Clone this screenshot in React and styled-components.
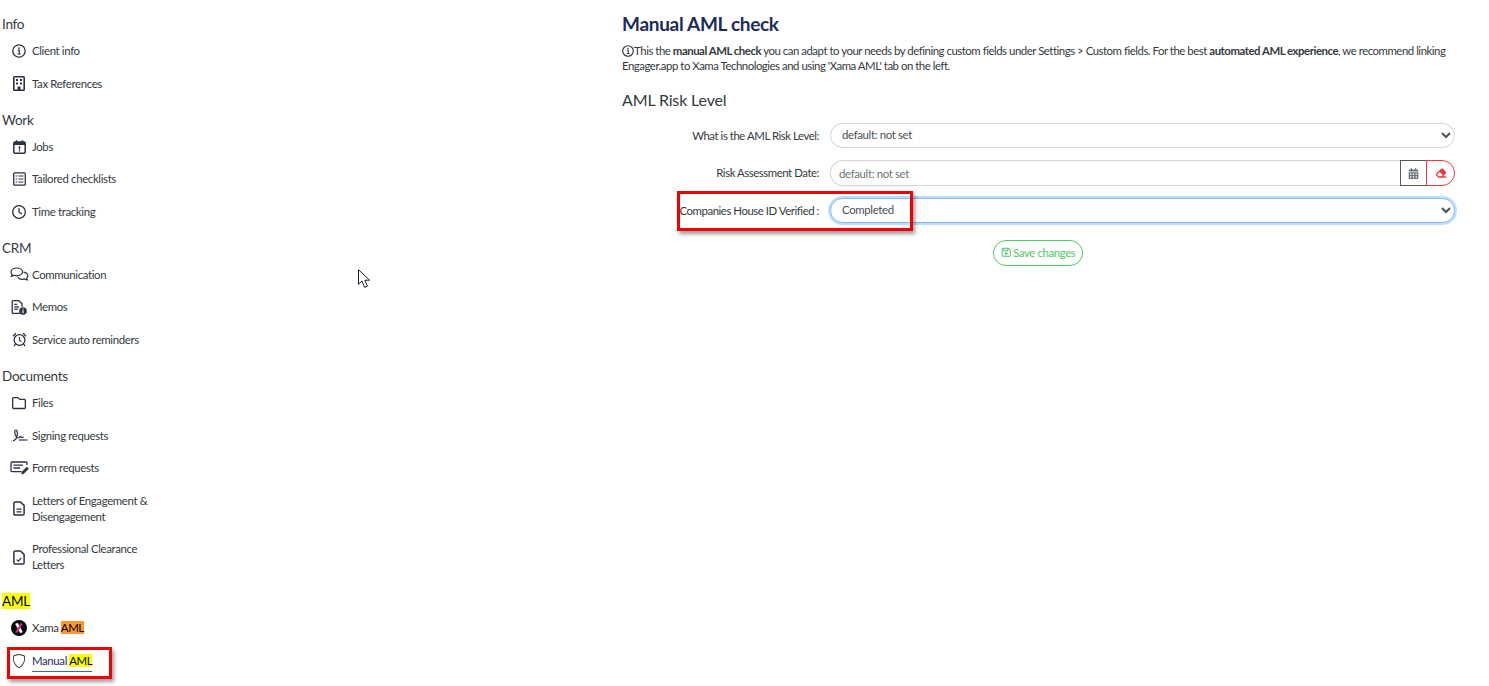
import styled, { createGlobalStyle } from "styled-components";
import { FaRegClock, FaRegFolder, FaCalendarDays, FaEraser, FaRegFloppyDisk } from "react-icons/fa6";
import { BsShield } from "react-icons/bs";

const GlobalStyle = createGlobalStyle`
  html, body {
    margin: 0;
    height: 100%;
    overflow: hidden;
    background: #fff;
  }
  body {
    font-family: Lato, "Liberation Sans", sans-serif;
    font-size: 11.4px;
    letter-spacing: -0.35px;
    color: #343a40;
  }
`;

const Page = styled.div`
  position: relative;
  display: grid;
  grid-template-columns: 622px 1fr;
  padding-right: 34px;
  height: 686px;
  box-sizing: border-box;
`;

const Sidebar = styled.nav`
  padding-top: 14px;
`;

const Section = styled.section`
  margin-bottom: 9.6px;
`;

const SectionTitle = styled.h3`
  margin: 0;
  padding-left: 2px;
  font-size: 13.5px;
  font-weight: 400;
  line-height: 21px;
  letter-spacing: -0.25px;
  color: #343a40;
`;

const NavItem = styled.a`
  position: relative;
  display: flex;
  align-items: center;
  width: 118px;
  padding: 8.25px 0 8.25px 32px;
  line-height: 16px;
  color: #343a40;
`;

const NavIcon = styled.span`
  position: absolute;
  left: 9px;
  top: 50%;
  transform: translateY(-50%);
  width: 20px;
  height: 18px;
  display: flex;
  align-items: center;
  justify-content: center;
  font-size: 14px;
  color: #2a3142;
`;

const ActiveLabel = styled.span`
  border-bottom: 1px solid #3a63e0;
  padding-bottom: 2px;
  margin-bottom: -3px;
  color: #1f2d5c;
`;

const Yellow = styled.mark`
  background: #ffff00;
  color: #000;
`;

const Orange = styled.mark`
  background: #ff9632;
  color: #000;
`;

const Callout = styled.div`
  position: absolute;
  left: ${(p) => p.$left}px;
  top: ${(p) => p.$top}px;
  width: ${(p) => p.$width}px;
  height: ${(p) => p.$height}px;
  box-sizing: border-box;
  border: 3px solid #f00000;
  box-shadow: 2px 3px 4px rgba(0, 0, 0, 0.4);
  pointer-events: none;
`;

const Main = styled.main`
  min-width: 0;
`;

const Title = styled.h1`
  margin: 12px 0 0;
  font-size: 19px;
  font-weight: 700;
  line-height: 24px;
  letter-spacing: -0.3px;
  color: #1b2b5b;
`;

const Intro = styled.p`
  margin: 7px 0 0;
  line-height: 15px;
  letter-spacing: -0.47px;
  color: #343a40;

  svg {
    vertical-align: -2px;
    margin-right: -2px;
  }

  b {
    font-weight: 700;
  }
`;

const Subtitle = styled.h2`
  margin: 17px 0 0;
  font-size: 16px;
  font-weight: 400;
  line-height: 20px;
  letter-spacing: -0.15px;
  color: #343a40;
`;

const Form = styled.form`
  margin-top: 13px;
  display: flex;
  flex-direction: column;
  gap: 12px;
`;

const Row = styled.div`
  position: relative;
  display: grid;
  grid-template-columns: 197px 1fr;
  column-gap: 11px;
  align-items: center;
`;

const Label = styled.label`
  padding-bottom: 1px;
  text-align: right;
  white-space: nowrap;
  letter-spacing: -0.45px;
  color: #343a40;
`;

const Select = styled.select`
  width: 100%;
  height: 25px;
  box-sizing: border-box;
  padding: 0 7px 2px;
  font: 11.4px Lato, "Liberation Sans", sans-serif;
  letter-spacing: -0.35px;
  color: #495057;
  background-color: #fff;
  border: 1px solid ${(p) => (p.$focused ? "#80bdff" : "#ced4da")};
  border-radius: 13px;
  outline: none;
  box-shadow: ${(p) => (p.$focused ? "0 0 0 2px rgba(0, 123, 255, 0.25)" : "none")};
`;

const DateGroup = styled.div`
  display: flex;
  height: 26px;
`;

const DateInput = styled.input`
  flex: 1;
  min-width: 0;
  box-sizing: border-box;
  padding: 0 8px;
  font: 11.4px Lato, "Liberation Sans", sans-serif;
  letter-spacing: -0.35px;
  color: #495057;
  border: 1px solid #ced4da;
  border-right: none;
  border-radius: 13px 0 0 13px;
  outline: none;

  &::placeholder {
    color: #6c757d;
    opacity: 1;
  }
`;

const AddonButton = styled.button`
  width: ${(p) => p.$width}px;
  padding: 0;
  display: flex;
  align-items: center;
  justify-content: center;
  background: #fff;
  font-size: ${(p) => p.$iconSize}px;
  color: ${(p) => p.$color};
  border: 1px solid ${(p) => p.$border};
  border-radius: ${(p) => p.$radius};
  margin-left: ${(p) => (p.$overlap ? "-1px" : "0")};
`;

const Actions = styled.div`
  display: flex;
  justify-content: center;
  margin-top: 5px;
  padding-right: 1px;
`;

const SaveButton = styled.button`
  display: flex;
  align-items: center;
  justify-content: center;
  gap: 2px;
  width: 90px;
  height: 26px;
  padding: 0 0 1px;
  font: 11.4px Lato, "Liberation Sans", sans-serif;
  letter-spacing: -0.4px;
  color: #4fc96a;
  background: #fff;
  border: 1px solid #4fc96a;
  border-radius: 13px;

  svg {
    font-size: 10.5px;
  }
`;

const Pointer = styled.svg`
  position: absolute;
  left: 358px;
  top: 269px;
`;

const ink = "#2a3142";

const InfoIcon = ({ size = 14 }) => (
  <svg width={size} height={size} viewBox="0 0 14 14">
    <circle cx="7" cy="7" r="6.2" fill="none" stroke={ink} strokeWidth="1.3" />
    <path d="M5.8 6.2h1.5v3.6M5.6 10h3.2" fill="none" stroke={ink} strokeWidth="1.2" />
    <rect x="6.2" y="3.4" width="1.5" height="1.5" fill={ink} />
  </svg>
);

const BuildingIcon = () => (
  <svg width="12" height="15" viewBox="0 0 12 15">
    <rect x="0.8" y="0.8" width="10.4" height="13.4" rx="0.8" fill="none" stroke={ink} strokeWidth="1.6" />
    <path
      d="M3 3h2v2H3zM7 3h2v2H7zM3 6.5h2v2H3zM7 6.5h2v2H7zM4.5 10.5h3V14h-3z"
      fill={ink}
    />
  </svg>
);

const CalendarAlert = () => (
  <svg width="13" height="14" viewBox="0 0 13 14">
    <path d="M3.5 0.2v2.5M9.5 0.2v2.5" stroke={ink} strokeWidth="1.4" />
    <rect x="0.8" y="2" width="11.4" height="11.2" rx="1.2" fill="none" stroke={ink} strokeWidth="1.5" />
    <rect x="1" y="2" width="11" height="3" fill={ink} />
    <path d="M6.5 6.2v3.2M6.5 10.2v1.4" stroke={ink} strokeWidth="1.4" />
  </svg>
);

const ChecklistIcon = () => (
  <svg width="13" height="14" viewBox="0 0 13 14">
    <rect x="0.7" y="0.9" width="11.6" height="12.2" rx="1.2" fill="none" stroke={ink} strokeWidth="1.3" />
    <path d="M2.6 4h1.6M5.4 4h5M2.6 7h1.6M5.4 7h5M2.6 10h1.6M5.4 10h5" stroke={ink} strokeWidth="1.2" />
  </svg>
);

const CommentsIcon = () => (
  <svg width="19" height="15" viewBox="0 0 19 15">
    <path
      d="M6.8 1C3.6 1 1 2.8 1 5.1c0 1 .5 1.9 1.3 2.6-.2.8-.8 1.3-1 1.6 1.2 0 2.3-.5 3-1 .8.3 1.6.5 2.5.5 3.2 0 5.8-1.9 5.8-3.7C12.6 2.8 10 1 6.8 1z"
      fill="none"
      stroke={ink}
      strokeWidth="1.2"
    />
    <path
      d="M13.6 5.2c2.4.4 4.2 1.8 4.2 3.6 0 1-.5 1.8-1.2 2.5.2.8.7 1.3.9 1.6-1.1 0-2.1-.5-2.8-1-.7.2-1.5.4-2.3.4-2 0-3.8-.8-4.8-2"
      fill="none"
      stroke={ink}
      strokeWidth="1.2"
    />
  </svg>
);

const MemoInfo = () => (
  <svg width="16" height="15" viewBox="0 0 16 15">
    <path
      d="M9 13.4H2.2a1 1 0 0 1-1-1V1.7a1 1 0 0 1 1-1h5.6L11 3.7v3"
      fill="none"
      stroke={ink}
      strokeWidth="1.3"
    />
    <path d="M3.2 4.4h3M3.2 6.8h5M3.2 9.2h4" stroke={ink} strokeWidth="1.2" />
    <circle cx="12" cy="11" r="3.8" fill={ink} />
    <path d="M12 10.2v3M12 8.5v1" stroke="#fff" strokeWidth="1.2" />
  </svg>
);

const AlarmIcon = () => (
  <svg width="15" height="15" viewBox="0 0 15 15">
    <circle cx="7.5" cy="8" r="5.4" fill="none" stroke={ink} strokeWidth="1.3" />
    <path d="M7.5 5v3.3l2 1.2" fill="none" stroke={ink} strokeWidth="1.1" />
    <path d="M1 4.2 3.8 1.2M14 4.2 11.2 1.2M3.4 12.2 2 14M11.6 12.2 13 14" stroke={ink} strokeWidth="1.3" />
  </svg>
);

const SignatureIcon = () => (
  <svg width="18" height="13" viewBox="0 0 18 13">
    <path
      d="M1 12h.6M3 11.6c2.4 0 4.4-3 4.4-7C7.4 2.4 6.6 1 5.8 1 4.6 1 4.4 3.2 5.2 5.4c.6 1.8 1.6 3.6 3 3.6 1.2 0 1.4-1.6 2.2-1.6.6 0 .4 1 1 1h2.2"
      fill="none"
      stroke={ink}
      strokeWidth="1.2"
    />
    <path d="M9 11h8.4" stroke={ink} strokeWidth="1.2" />
  </svg>
);

const FormIcon = () => (
  <svg width="19" height="14" viewBox="0 0 19 14">
    <path
      d="M11.5 10.7H2.2a1.2 1.2 0 0 1-1.2-1.2V2.2A1.2 1.2 0 0 1 2.2 1h13.6A1.2 1.2 0 0 1 17 2.2V4"
      fill="none"
      stroke={ink}
      strokeWidth="1.3"
    />
    <path d="M3.5 4.2h9.5M3.5 7h6.5" stroke={ink} strokeWidth="1.3" />
    <path d="M11.2 13.4l.6-2.6 5-5 2 2-5 5z" fill={ink} />
  </svg>
);

const FileIcon = ({ children }) => (
  <svg width="12" height="15" viewBox="0 0 12 15">
    <path
      d="M7.4 0.9H2.2A1.3 1.3 0 0 0 .9 2.2v10.6a1.3 1.3 0 0 0 1.3 1.3h7.6a1.3 1.3 0 0 0 1.3-1.3V4.4z"
      fill="none"
      stroke={ink}
      strokeWidth="1.5"
    />
    {children}
  </svg>
);

const XamaLogo = () => (
  <svg width="16" height="16" viewBox="0 0 16 16">
    <circle cx="8" cy="8" r="8" fill="#0b0b0f" />
    <path d="M5.4 3.4 L10.6 12.6" stroke="#fff" strokeWidth="2.8" />
    <path d="M10.4 3.4 L5.6 12.6" stroke="#e0259a" strokeWidth="2.2" />
  </svg>
);

const sections = [
  {
    title: "Info",
    items: [
      { icon: <InfoIcon />, label: "Client info" },
      { icon: <BuildingIcon />, label: "Tax References" },
    ],
  },
  {
    title: "Work",
    items: [
      { icon: <CalendarAlert />, label: "Jobs" },
      { icon: <ChecklistIcon />, label: "Tailored checklists" },
      { icon: <FaRegClock />, label: "Time tracking" },
    ],
  },
  {
    title: "CRM",
    items: [
      { icon: <CommentsIcon />, label: "Communication" },
      { icon: <MemoInfo />, label: "Memos" },
      { icon: <AlarmIcon />, label: "Service auto reminders" },
    ],
  },
  {
    title: "Documents",
    items: [
      { icon: <FaRegFolder />, label: "Files" },
      { icon: <SignatureIcon />, label: "Signing requests" },
      { icon: <FormIcon />, label: "Form requests" },
      {
        icon: (
          <FileIcon>
            <path d="M3.5 8.2h5M3.5 10.8h5" stroke={ink} strokeWidth="1.2" />
          </FileIcon>
        ),
        label: "Letters of Engagement & Disengagement",
      },
      {
        icon: (
          <FileIcon>
            <path d="M3.6 9.6l1.8 1.6 3-3.4" fill="none" stroke={ink} strokeWidth="1.2" />
          </FileIcon>
        ),
        label: "Professional Clearance Letters",
      },
    ],
  },
];

const App = () => {
  return (
    <Page>
      <GlobalStyle />
      <Sidebar>
        {sections.map((section) => (
          <Section key={section.title}>
            <SectionTitle>{section.title}</SectionTitle>
            {section.items.map((item) => (
              <NavItem key={item.label}>
                <NavIcon>{item.icon}</NavIcon>
                <span>{item.label}</span>
              </NavItem>
            ))}
          </Section>
        ))}
        <Section>
          <SectionTitle>
            <Yellow>AML</Yellow>
          </SectionTitle>
          <NavItem>
            <NavIcon>
              <XamaLogo />
            </NavIcon>
            <span>
              Xama <Orange>AML</Orange>
            </span>
          </NavItem>
          <NavItem>
            <NavIcon>
              <BsShield />
            </NavIcon>
            <ActiveLabel>
              Manual <Yellow>AML</Yellow>
            </ActiveLabel>
            <Callout $left={7} $top={3} $width={105} $height={32} />
          </NavItem>
        </Section>
      </Sidebar>

      <Main>
        <Title>Manual AML check</Title>
        <Intro>
          <InfoIcon size={12} /> This the <b>manual AML check</b> you can adapt to your needs by defining
          custom fields under Settings &gt; Custom fields. For the best <b>automated AML experience</b>, we
          recommend linking Engager.app to Xama Technologies and using 'Xama AML' tab on the left.
        </Intro>
        <Subtitle>AML Risk Level</Subtitle>
        <Form>
          <Row>
            <Label>What is the AML Risk Level:</Label>
            <Select defaultValue="default">
              <option value="default">default: not set</option>
            </Select>
          </Row>
          <Row>
            <Label>Risk Assessment Date:</Label>
            <DateGroup>
              <DateInput placeholder="default: not set" readOnly />
              <AddonButton type="button" $width={27} $iconSize={11} $color="#6c757d" $border="#55595e" $radius="0">
                <FaCalendarDays />
              </AddonButton>
              <AddonButton
                type="button"
                $width={29}
                $iconSize={12}
                $color="#f03a3a"
                $border="#f03a3a"
                $radius="0 13px 13px 0"
                $overlap
              >
                <FaEraser />
              </AddonButton>
            </DateGroup>
          </Row>
          <Row>
            <Label>Companies House ID Verified :</Label>
            <Select $focused defaultValue="completed">
              <option value="completed">Completed</option>
            </Select>
            <Callout $left={55} $top={-7} $width={236} $height={40} />
          </Row>
          <Actions>
            <SaveButton type="button">
              <FaRegFloppyDisk />
              Save changes
            </SaveButton>
          </Actions>
        </Form>
      </Main>

      <Pointer width="14" height="20" viewBox="0 0 14 20">
        <path
          d="M0.5 0.7V15.2L4 12L6.6 18.4L9.4 17.2L6.8 11.2H11.6Z"
          fill="#fff"
          stroke="#1a1a2a"
          strokeWidth="1"
        />
      </Pointer>
    </Page>
  );
};

export default App;
